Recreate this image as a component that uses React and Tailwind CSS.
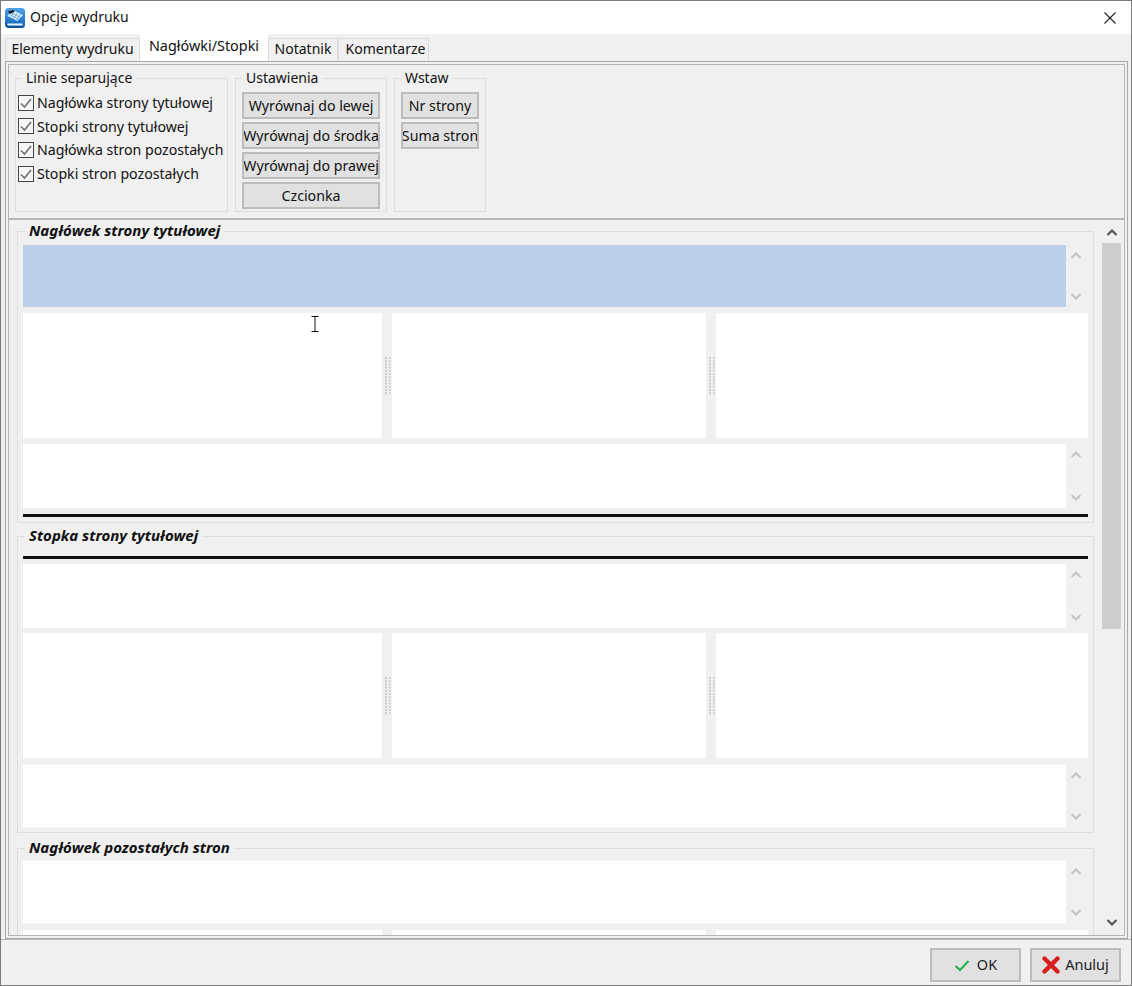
const FONT = "font-['Noto_Sans',sans-serif]";

function AppIcon() {
  return (
    <svg width="20" height="20" viewBox="0 0 20 20" className="shrink-0">
      <defs>
        <linearGradient id="bookBlue" x1="0" y1="0" x2="0" y2="1">
          <stop offset="0" stopColor="#4aa3ea" />
          <stop offset="1" stopColor="#0f5fb5" />
        </linearGradient>
      </defs>
      <rect x="0" y="0" width="20" height="20" rx="3.5" fill="url(#bookBlue)" />
      <path d="M7 1.5 L18 7 L12.5 13 L2.5 8 Z" fill="#dfeefa" />
      <path d="M5 4 L15.5 9.5 M3.8 6 L14 11.5 M9.5 3 L5.5 9.5 M12.5 4.5 L8.5 11 M15.5 6 L11.5 12.5" stroke="#5f9fdc" strokeWidth="0.8" />
      <path d="M3 3.5 L8 1.8 L10 3.2 L5 6 Z" fill="#1c1c2a" />
      <path d="M2 15.5 H17.5 V17.5 H3.5 Q2 17.5 2 15.5 Z" fill="#e6f0fa" />
      <path d="M1 14.5 Q1 19 4 19 H18" stroke="#0b3f80" strokeWidth="1" fill="none" />
    </svg>
  );
}

function Chevron({ down, color, className }) {
  return (
    <svg width="12" height="9" viewBox="0 0 12 9" className={className}>
      <polyline
        points={down ? "1.5,2 6,6.5 10.5,2" : "1.5,7 6,2.5 10.5,7"}
        fill="none"
        stroke={color}
        strokeWidth="2.2"
      />
    </svg>
  );
}

function Tab({ label, active, width, className = "" }) {
  if (active) {
    return (
      <div className={`h-[27px] ${width} bg-white flex justify-center pt-[2px] text-[14.4px] leading-[20px] text-[#111]`}>
        {label}
      </div>
    );
  }
  return (
    <div className={`h-[23px] ${width} bg-[#f0f0f0] border border-b-0 border-[#dcdcdc] flex justify-center text-[14px] leading-[20px] text-[#111] ${className}`}>
      {label}
    </div>
  );
}

function CheckRow({ label }) {
  return (
    <div className="h-[23.6px] flex items-center gap-[3px] text-[14.15px] text-[#111]">
      <span className="w-[16px] h-[16px] border border-[#444] bg-[#f6f6f6] flex items-center justify-center shrink-0">
        <svg width="14" height="14" viewBox="0 0 14 14">
          <polyline points="2,7.5 5.5,11 12,3" fill="none" stroke="#707070" strokeWidth="1.6" />
        </svg>
      </span>
      <span className="whitespace-nowrap">{label}</span>
    </div>
  );
}

function Btn({ label }) {
  return (
    <button className="h-[27px] w-full bg-[#e1e1e1] border-2 border-[#bcbcbc] flex items-center justify-center text-[14.2px] text-[#111] whitespace-nowrap overflow-hidden">
      {label}
    </button>
  );
}

function TopGroup({ title, className, legendClass = "", children }) {
  return (
    <fieldset className={`${className} min-w-0 h-[143px] border border-[#dedede] shrink-0`}>
      <legend className={`px-[4px] text-[14px] leading-[18px] text-[#111] ${legendClass}`}>{title}</legend>
      {children}
    </fieldset>
  );
}

function Editor({ height = "h-[62px]", selected }) {
  return (
    <div className={`${height} flex`}>
      <div className={`w-[1043px] ${selected ? "bg-[#b9cfea]" : "bg-white"}`} />
      <div className="flex-1 flex flex-col justify-between items-center py-[6px] pr-[2px]">
        <Chevron color="#c4c4c4" />
        <Chevron down color="#c4c4c4" />
      </div>
    </div>
  );
}

function Grip() {
  const rows = [0, 1, 2, 3, 4, 5, 6, 7, 8, 9, 10, 11];
  return (
    <div className="w-[10px] flex items-center justify-center pl-[1px]">
      <svg width="8" height="38" viewBox="0 0 8 38">
        {rows.map((i) => (
          <g key={i} fill="#c9c9c9">
            <rect x="1" y={i * 3.2} width="2" height="2" />
            <rect x="5" y={i * 3.2} width="1.4" height="2" />
          </g>
        ))}
      </svg>
    </div>
  );
}

function Panes() {
  return (
    <div className="h-[125px] flex shrink-0">
      <div className="w-[359px] bg-white" />
      <Grip />
      <div className="w-[314px] bg-white" />
      <Grip />
      <div className="flex-1 bg-white" />
    </div>
  );
}

function Section({ title, className = "", children }) {
  return (
    <fieldset className={`min-w-0 border border-[#dedede] px-[5px] pb-[5px] ${className}`}>
      <legend className="ml-[2px] px-[4px] pb-[1px] text-[15px] leading-[19px] font-bold italic text-[#111]">{title}</legend>
      {children}
    </fieldset>
  );
}

export default function App() {
  return (
    <div className={`w-[1132px] h-[986px] relative border border-[#7b7b7b] bg-[#f0f0f0] flex flex-col overflow-hidden ${FONT}`}>
      {/* title bar */}
      <div className="h-[33px] bg-white flex items-center pl-[4px] shrink-0">
        <AppIcon />
        <span className="ml-[5px] mb-[2px] text-[14px] text-[#111]">Opcje wydruku</span>
        <svg width="12" height="12" viewBox="0 0 12 12" className="ml-auto mr-[15px]">
          <path d="M0.5 0.5 L11.5 11.5 M11.5 0.5 L0.5 11.5" stroke="#222" strokeWidth="1.1" />
        </svg>
      </div>

      {/* tabs */}
      <div className="h-[27px] flex items-end pl-[4px] shrink-0">
        <Tab label="Elementy wydruku" width="w-[135px]" />
        <Tab label="Nagłówki/Stopki" width="w-[128px]" active />
        <Tab label="Notatnik" width="w-[70px]" />
        <Tab label="Komentarze" width="w-[91px]" className="pl-[4px]" />
      </div>

      {/* tab page */}
      <div className="h-[878px] ml-[4px] mr-[3px] border border-[#a9a9a9] p-[2px] flex flex-col shrink-0">
        <div className="h-[156px] border border-[#b5b5b5] border-b-2 flex gap-[7px] pl-[6px] pt-[4px] shrink-0">
          <TopGroup title="Linie separujące" className="w-[213px] px-[2px]" legendClass="ml-[4px]">
            <div className="pt-[4px]">
              <CheckRow label="Nagłówka strony tytułowej" />
              <CheckRow label="Stopki strony tytułowej" />
              <CheckRow label="Nagłówka stron pozostałych" />
              <CheckRow label="Stopki stron pozostałych" />
            </div>
          </TopGroup>
          <TopGroup title="Ustawienia" className="w-[152px] px-[6px]">
            <div className="flex flex-col gap-[3px] pt-[5px]">
              <Btn label="Wyrównaj do lewej" />
              <Btn label="Wyrównaj do środka" />
              <Btn label="Wyrównaj do prawej" />
              <Btn label="Czcionka" />
            </div>
          </TopGroup>
          <TopGroup title="Wstaw" className="w-[92px] px-[6px]">
            <div className="flex flex-col gap-[3px] pt-[5px]">
              <Btn label="Nr strony" />
              <Btn label="Suma stron" />
            </div>
          </TopGroup>
        </div>

        <div className="flex-1 min-h-0 border border-t-0 border-[#b5b5b5] pt-[1px] flex overflow-hidden">
          <div className="flex-1 min-w-0 pl-[8px] pr-[8px] overflow-hidden">
            <Section title="Nagłówek strony tytułowej" className="h-[302px]">
              <div className="flex flex-col gap-[6px] pt-[4px]">
                <Editor selected />
                <Panes />
                <Editor height="h-[64px]" />
                <div className="h-[3px] bg-[#111]" />
              </div>
            </Section>
            <Section title="Stopka strony tytułowej" className="mt-[3px] h-[307px]">
              <div className="pt-[10px]">
                <div className="h-[3px] bg-[#111] mb-[5px]" />
                <Editor height="h-[64px]" />
                <div className="h-[5px]" />
                <Panes />
                <div className="h-[7px]" />
                <Editor />
              </div>
            </Section>
            <Section title="Nagłówek pozostałych stron" className="mt-[5px]">
              <div className="pt-[3px]">
                <Editor />
                <div className="h-[7px]" />
                <Panes />
              </div>
            </Section>
          </div>

          {/* main scrollbar */}
          <div className="w-[19px] mr-[3px] flex flex-col items-center shrink-0 pt-[7px] pb-[8px]">
            <Chevron color="#555555" className="shrink-0" />
            <div className="w-full h-[386px] mt-[6px] bg-[#cdcdcd] shrink-0" />
            <Chevron down color="#555555" className="mt-auto shrink-0" />
          </div>
        </div>
      </div>

      {/* bottom bar */}
      <div className="flex-1 border-t border-[#b5b5b5] flex justify-end items-start gap-[9px] pt-[8px] pr-[10px]">
        <button className="w-[91px] h-[34px] bg-[#e1e1e1] border-2 border-[#bcbcbc] flex items-center justify-center gap-[7px] text-[14.5px] text-[#222]">
          <svg width="16" height="13" viewBox="0 0 16 13">
            <polyline points="1.5,7 6,11 14.5,2" fill="none" stroke="#22b14c" strokeWidth="2" />
          </svg>
          OK
        </button>
        <button className="w-[91px] h-[34px] bg-[#e1e1e1] border-2 border-[#bcbcbc] flex items-center justify-center gap-[5px] text-[14.5px] text-[#222]">
          <svg width="18" height="18" viewBox="0 0 18 18">
            <path d="M2.5 2.5 L15.5 15.5 M15.5 2.5 L2.5 15.5" stroke="#d81e1e" strokeWidth="4.4" strokeLinecap="round" />
          </svg>
          Anuluj
        </button>
      </div>

      {/* mouse cursor over the first pane */}
      <svg width="8" height="16" viewBox="0 0 8 16" className="absolute left-[310px] top-[315px]">
        <path d="M0.5 0.5 H7.5 M4 0.5 V15.5 M0.5 15.5 H7.5" stroke="#111" strokeWidth="1" fill="none" />
      </svg>
    </div>
  );
}
